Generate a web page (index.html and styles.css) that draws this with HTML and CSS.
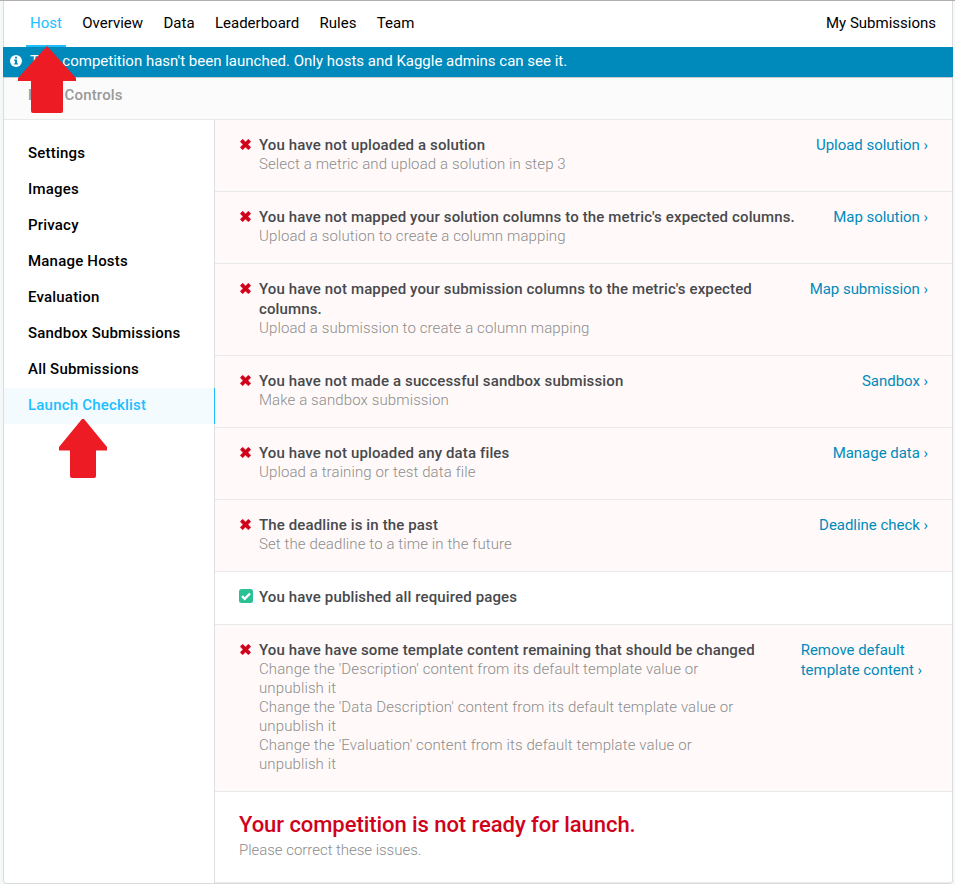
FILE: index.html
```html
<!DOCTYPE html>
<html lang="en">
<head>
<meta charset="utf-8">
<title>Launch Checklist</title>
<link rel="stylesheet" href="styles.css">
</head>
<body>
<svg class="defs" aria-hidden="true">
  <symbol id="cross" viewBox="0 0 11 11"><path d="M2.600 .3 5.500 3 8.400 .3 10.700 2.600 8 5.500 10.700 8.400 8.400 10.700 5.500 8 2.600 10.700 .3 8.400 3 5.500 .3 2.600Z" stroke="#d0021b" stroke-width=".6" stroke-linejoin="round"/></symbol>
</svg>
<div class="panel">
  <nav class="nav">
    <a class="nav-link active">Host</a>
    <a class="nav-link">Overview</a>
    <a class="nav-link">Data</a>
    <a class="nav-link">Leaderboard</a>
    <a class="nav-link">Rules</a>
    <a class="nav-link">Team</a>
    <a class="nav-link last">My Submissions</a>
  </nav>
  <div class="banner">
    <svg class="info" viewBox="0 0 12 12"><circle cx="6" cy="6" r="6" fill="#fff"/><path d="M5 1.800h2v1.700H5zM4.200 4.600H7v3.600h.9v1.400H4.200V8.200H5V6h-.8z" fill="#008abc"/></svg>
    <span>This competition hasn't been launched. Only hosts and Kaggle admins can see it.</span>
  </div>
  <div class="heading">Host Controls</div>
  <div class="body">
    <aside class="side">
      <a class="side-link">Settings</a>
      <a class="side-link">Images</a>
      <a class="side-link">Privacy</a>
      <a class="side-link">Manage Hosts</a>
      <a class="side-link">Evaluation</a>
      <a class="side-link">Sandbox Submissions</a>
      <a class="side-link">All Submissions</a>
      <a class="side-link active">Launch Checklist</a>
    </aside>
    <main class="list">
      <div class="row"><svg class="x"><use href="#cross"/></svg><div class="text"><h3>You have not uploaded a solution</h3><p>Select a metric and upload a solution in step 3</p></div><a class="action">Upload solution ›</a></div>
      <div class="row"><svg class="x"><use href="#cross"/></svg><div class="text"><h3>You have not mapped your solution columns to the metric's expected columns.</h3><p>Upload a solution to create a column mapping</p></div><a class="action">Map solution ›</a></div>
      <div class="row"><svg class="x"><use href="#cross"/></svg><div class="text"><h3>You have not mapped your submission columns to the metric's expected<br>columns.</h3><p>Upload a submission to create a column mapping</p></div><a class="action">Map submission ›</a></div>
      <div class="row"><svg class="x"><use href="#cross"/></svg><div class="text"><h3>You have not made a successful sandbox submission</h3><p>Make a sandbox submission</p></div><a class="action">Sandbox ›</a></div>
      <div class="row"><svg class="x"><use href="#cross"/></svg><div class="text"><h3>You have not uploaded any data files</h3><p>Upload a training or test data file</p></div><a class="action">Manage data ›</a></div>
      <div class="row"><svg class="x"><use href="#cross"/></svg><div class="text"><h3>The deadline is in the past</h3><p>Set the deadline to a time in the future</p></div><a class="action">Deadline check ›</a></div>
      <div class="row done"><svg class="check" viewBox="0 0 14 14"><rect width="14" height="14" rx="2.500" fill="#2bc196"/><path d="M3 7.200 5.700 9.800 11 4.500" fill="none" stroke="#fff" stroke-width="2.300"/></svg><div class="text"><h3>You have published all required pages</h3></div></div>
      <div class="row"><svg class="x"><use href="#cross"/></svg><div class="text"><h3>You have have some template content remaining that should be changed</h3><p>Change the 'Description' content from its default template value or<br>unpublish it</p><p>Change the 'Data Description' content from its default template value or<br>unpublish it</p><p>Change the 'Evaluation' content from its default template value or<br>unpublish it</p></div><a class="action wide">Remove default<br>template content ›</a></div>
      <div class="verdict"><h2>Your competition is not ready for launch.</h2><p>Please correct these issues.</p></div>
    </main>
  </div>
</div>
<svg class="arrow arrow-host" viewBox="0 0 58 67"><path d="M29 0 58 32V35H45V65Q45 67 43 67H15Q13 67 13 65V35H0V32Z"/></svg>
<svg class="arrow arrow-launch" viewBox="0 0 48 59"><path d="M23 0H25L48 28V31.500H37V57Q37 59 35 59H13Q11 59 11 57V31.500H0V28Z"/></svg>
</body>
</html>
```
FILE: styles.css
```css
* { box-sizing: border-box; }
body {
  margin: 0;
  height: 884px;
  padding: 0 2px 0 3px;
  border-top: 1px solid #b0aeb0;
  background: #f5f8f9;
  font-family: Roboto, "Liberation Sans", sans-serif;
  font-size: 15px;
  color: #000;
  position: relative;
  overflow: hidden;
  white-space: nowrap;
}
h2, h3, p { margin: 0; }
.defs { position: absolute; width: 0; height: 0; }
.panel {
  height: 883px;
  display: flex;
  flex-direction: column;
  background: #fff;
  border: 1px solid #dadddf;
  border-top: 0;
  border-radius: 0 0 4px 4px;
}
.nav { display: flex; height: 46px; padding: 0 16px 0 22px; flex: none; }
.nav-link { padding: 0 4px; margin-right: 12.4px; line-height: 44px; }
.nav-link.active { color: #20beff; border-bottom: 2px solid #20beff; }
.nav-link.last { margin: 0 0 0 auto; padding: 0; }
.banner {
  display: flex;
  align-items: center;
  gap: 8px;
  height: 31px;
  flex: none;
  margin: 0 -1px;
  padding: 0 7px 2px;
  background: #008abc;
  border-bottom: 1px solid #c9cdcf;
  color: #fff;
}
.info { width: 12px; height: 12px; }
.heading {
  height: 42px;
  flex: none;
  padding-left: 24px;
  line-height: 34px;
  background: #fbfbfb;
  border-bottom: 1px solid #e9e9e9;
  color: #999;
  font-weight: 500;
  letter-spacing: .18px;
}
.body { display: flex; flex: 1; min-height: 0; }
.side { width: 211px; flex: none; padding-top: 16px; border-right: 1px solid #dedfe0; }
.side-link {
  display: block;
  height: 36px;
  padding-left: 24px;
  line-height: 34px;
  font-weight: 500;
  letter-spacing: .2px;
}
.side-link.active {
  margin-right: -1px;
  color: #20beff;
  background: #f4fbff;
  border-right: 1px solid #20beff;
}
.list { flex: 1; }
.row {
  display: flex;
  padding: 15px 24px 17px;
  background: #fffaf9;
  border-bottom: 1px solid #e9e9e9;
}
.row.done { background: #fff; }
.x { width: 11px; height: 11px; margin: 4px 8px 0 1px; fill: #d0021b; flex: none; }
.check { width: 14px; height: 14px; margin: 2px 6px 0 0; flex: none; }
.text { flex: 1; }
h3 { color: #47494d; font-size: 15px; line-height: 20px; font-weight: 500; letter-spacing: .13px; }
.text p, .verdict p { color: #8c8c8c; line-height: 19px; font-weight: 300; letter-spacing: .11px; }
.action { color: #008abc; line-height: 20px; letter-spacing: -.03px; }
.action.wide { padding-right: 6px; }
.verdict { height: 91px; padding: 20px 24px 0; border-bottom: 1px solid #e9e9e9; }
h2 { color: #d0021b; font-size: 22px; line-height: 26px; font-weight: 500; letter-spacing: -.06px; }
.verdict p { line-height: 24px; letter-spacing: -.03px; }
.arrow { position: absolute; fill: #ed1c24; }
.arrow-host { left: 18px; top: 45px; width: 58px; height: 67px; }
.arrow-launch { left: 59px; top: 418px; width: 48px; height: 59px; }
```
